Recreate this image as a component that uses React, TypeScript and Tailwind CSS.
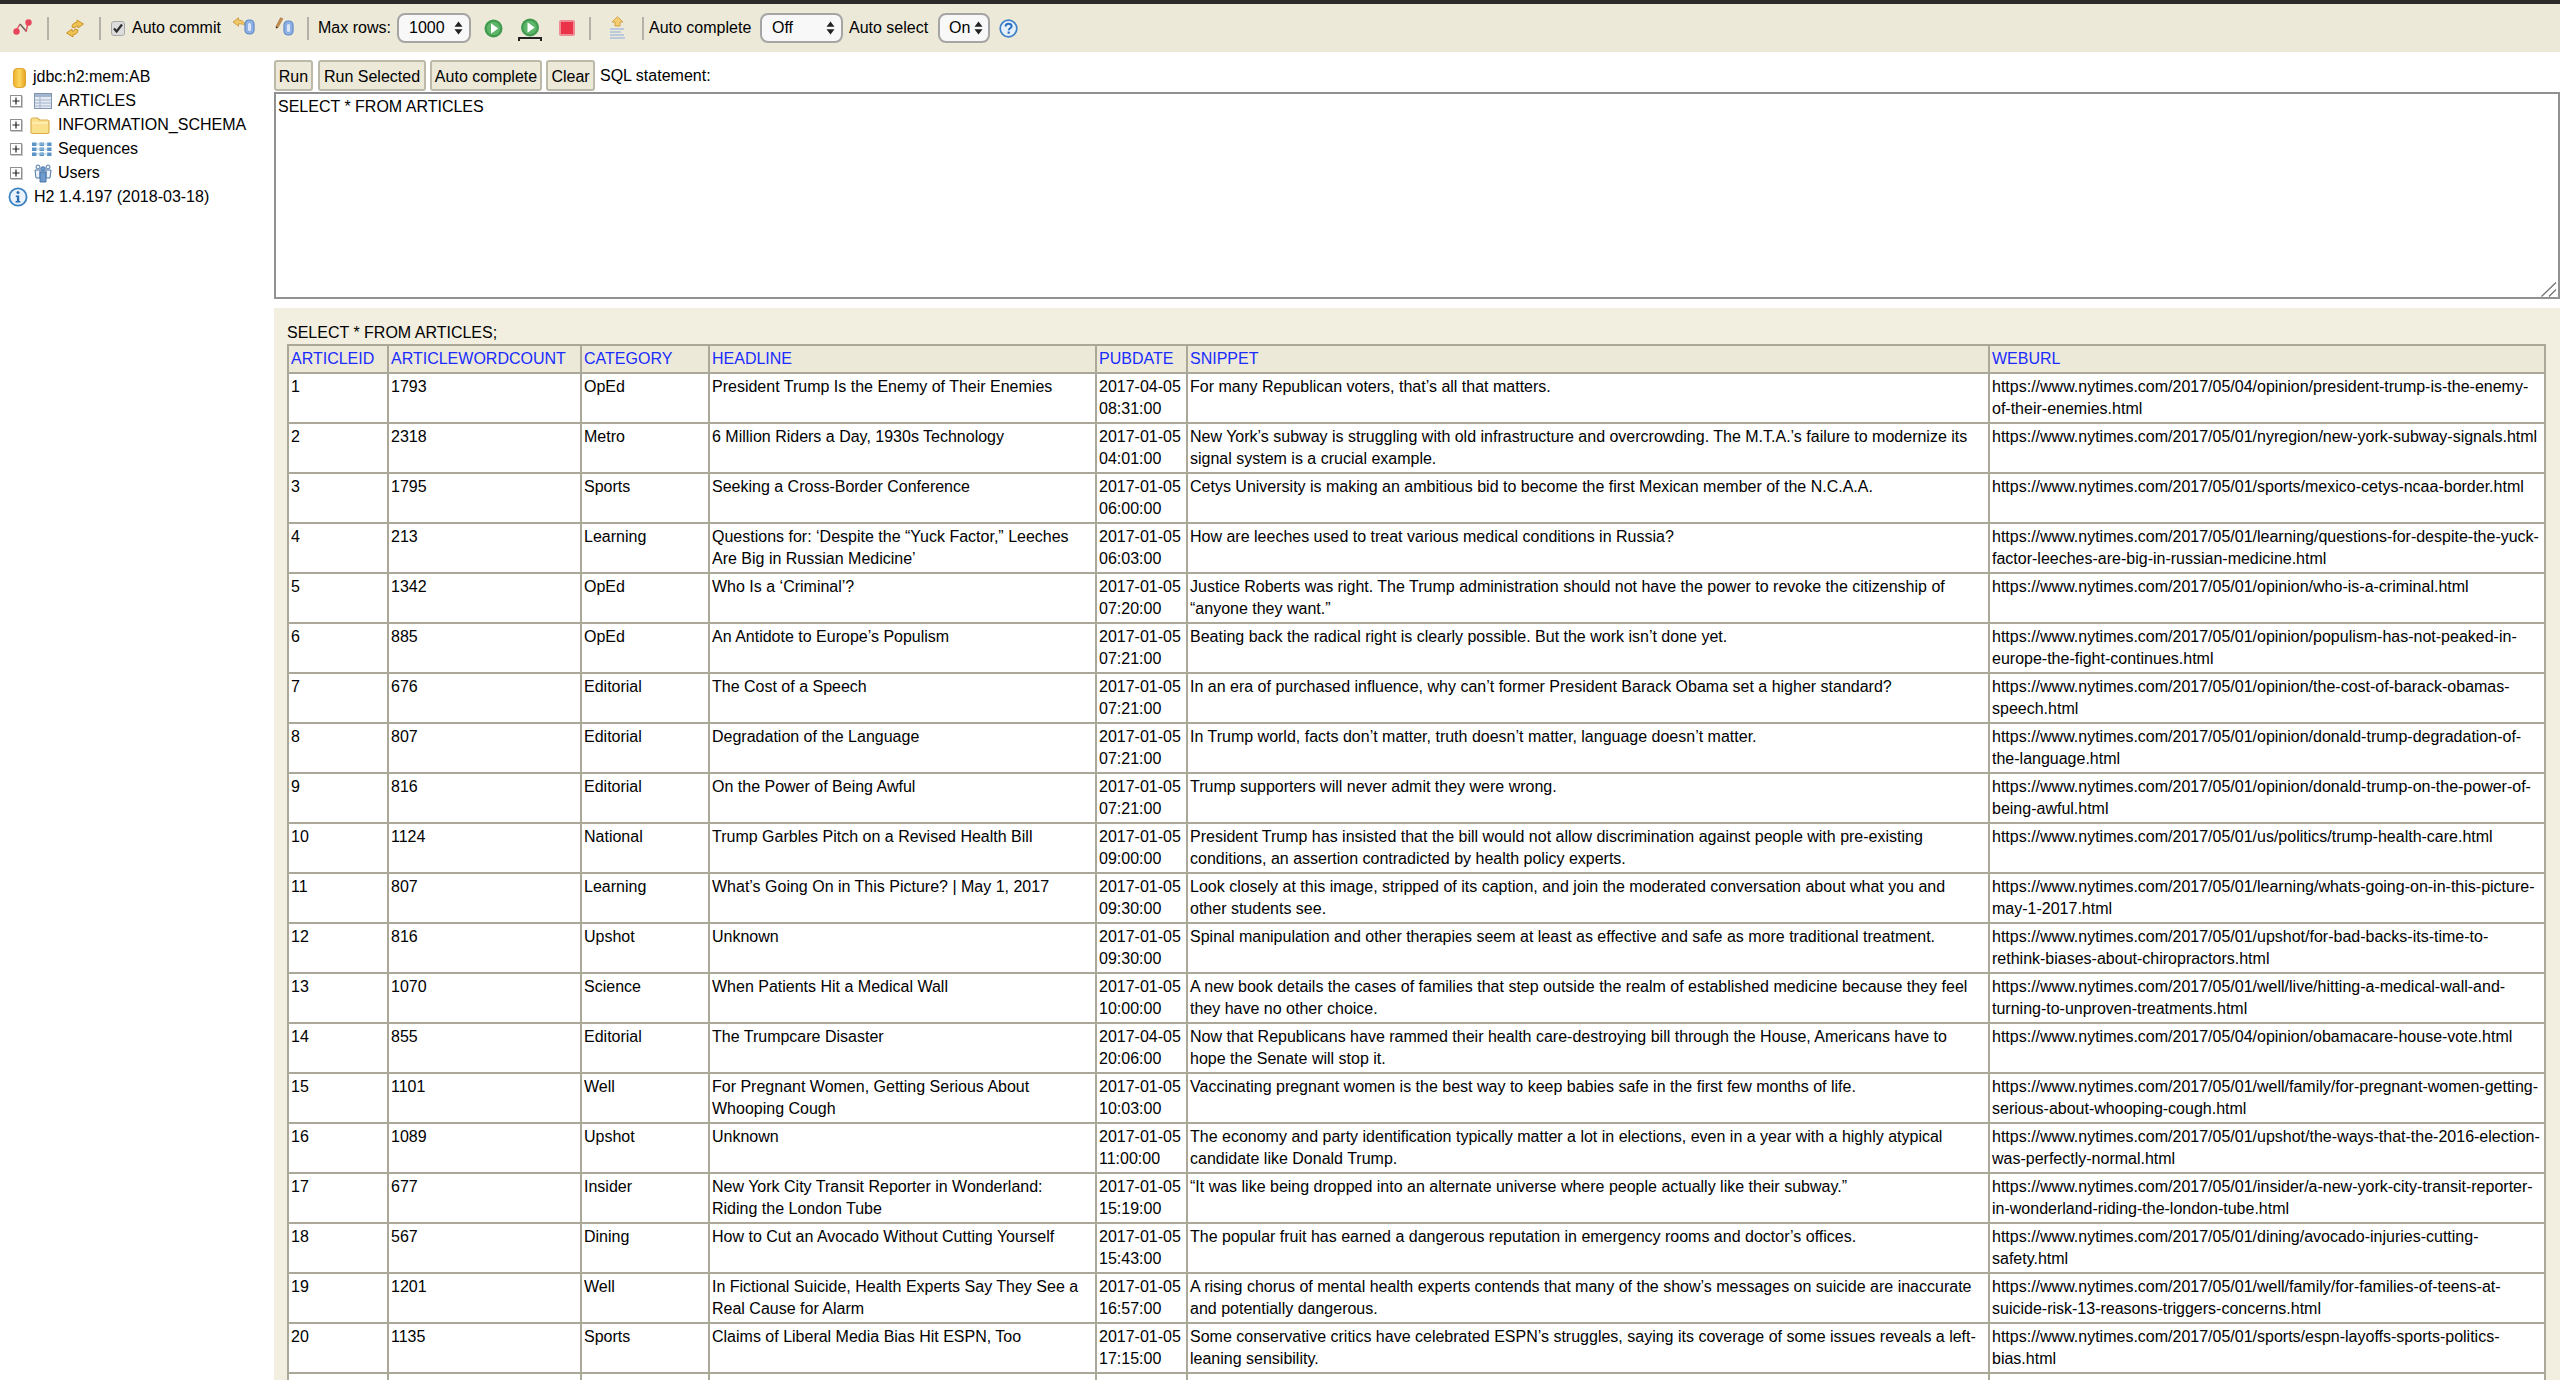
import React from "react";

const FONT = "font-['Liberation_Sans',Arial,sans-serif]";

const Sep = ({ className = "" }: { className?: string }) => (
  <div className={`w-[2px] h-[23px] bg-[#b4b2a8] shrink-0 ${className}`} />
);

const Cyl = ({ x, y }: { x: number; y: number }) => (
  <g>
    <rect x={x} y={y} width="9" height="14" rx="4" fill="#8fb0e2" stroke="#5f8ac8" strokeWidth="1.2" />
    <rect x={x + 3} y={y + 3} width="3" height="8" rx="1.5" fill="#dbe7f8" />
  </g>
);

const NodesIcon = () => (
  <svg width="19" height="17" viewBox="0 0 19 17" className="shrink-0 -mt-[2px]">
    <path d="M3 12 L7 5" stroke="#e0505f" strokeWidth="1.4" fill="none" />
    <path d="M7 5 L13 12" stroke="#6b5a58" strokeWidth="1.4" fill="none" />
    <path d="M13 13 L15 4" stroke="#e0505f" strokeWidth="1.4" fill="none" />
    <circle cx="3.5" cy="12.5" r="3.2" fill="#e8465c" />
    <circle cx="15.5" cy="3.5" r="3.2" fill="#e8465c" />
  </svg>
);

const RefreshIcon = () => (
  <svg width="20" height="19" viewBox="0 0 20 19" className="shrink-0">
    <path d="M7 8 C7 5 9 3.5 12 3.5 L12 1 L18.5 5 L13 9 L13 6.8 C11 6.8 10.5 7.5 10 9 Z" fill="#f0c452" stroke="#c9922e" strokeWidth="1" />
    <path d="M13 11 C13 14 11 15.5 8 15.5 L8 18 L1.5 14 L7 10 L7 12.2 C9 12.2 9.5 11.5 10 10 Z" fill="#f0c452" stroke="#c9922e" strokeWidth="1" />
  </svg>
);

const RollbackIcon = () => (
  <svg width="23" height="18" viewBox="0 0 23 18" className="shrink-0 -mt-[4px]">
    <path d="M1 5 L6.5 0.8 L6.5 3.2 C10 3.2 12.5 4.5 13 8.5 C11.5 7 9.5 6.8 6.5 6.8 L6.5 9.2 Z" fill="#f2c766" stroke="#c99a3e" strokeWidth="0.9" />
    <Cyl x={13} y={3} />
  </svg>
);

const CommitIcon = () => (
  <svg width="19" height="19" viewBox="0 0 19 19" className="shrink-0 -mt-[3px]">
    <path d="M1 9.5 L5.5 0.8 L7.8 1.8 L3 10.5 L1 11 Z" fill="#c98f4c" stroke="#9a6a34" strokeWidth="0.6" />
    <path d="M1 9.5 L3 10.5 L1 11.5 Z" fill="#333" />
    <Cyl x={9} y={4} />
  </svg>
);

const PlayIcon = () => (
  <svg width="19" height="19" viewBox="0 0 19 19" className="shrink-0">
    <circle cx="9.5" cy="9.5" r="9" fill="#3f9a4e" />
    <circle cx="9.5" cy="9.5" r="6.8" fill="#5cb569" />
    <path d="M7 4.3 L14.2 9.5 L7 14.7 Z" fill="#ffffff" />
  </svg>
);

const RunSelIcon = () => (
  <svg width="24" height="24" viewBox="0 0 24 24" className="shrink-0 mt-[4px]">
    <circle cx="12" cy="9.5" r="9" fill="#3f9a4e" />
    <circle cx="12" cy="9.5" r="6.8" fill="#5cb569" />
    <path d="M9.5 4.3 L16.7 9.5 L9.5 14.7 Z" fill="#ffffff" />
    <path d="M1 23 L1 20 L23 20 L23 23" stroke="#222" strokeWidth="2" fill="none" />
  </svg>
);

const StopIcon = () => (
  <div className="w-[16px] h-[16px] shrink-0 rounded-[2px] bg-[#ea3348] border-2 border-[#f08a94]" />
);

const HistoryIcon = () => (
  <svg width="17" height="25" viewBox="0 0 17 25" className="shrink-0">
    <path d="M8.5 0.8 L14 6 L11 6 L11 10 L6 10 L6 6 L3 6 Z" fill="#f4cd72" stroke="#d19d3e" strokeWidth="0.9" />
    <path d="M1 13 H15 M1 16 H12 M1 19 H15 M1 22 H16" stroke="#a9bfdc" strokeWidth="1.6" />
  </svg>
);

const HelpIcon = () => (
  <svg width="19" height="19" viewBox="0 0 19 19" className="shrink-0">
    <circle cx="9.5" cy="9.5" r="8.3" fill="#e6f0fb" stroke="#3f82c8" strokeWidth="1.7" />
    <path d="M6.6 7.4 C6.6 5.6 8 4.7 9.6 4.7 C11.3 4.7 12.6 5.7 12.6 7.2 C12.6 9.2 9.7 9.3 9.7 11.3" fill="none" stroke="#2a6fc0" strokeWidth="2" />
    <rect x="8.6" y="12.5" width="2.2" height="2.2" fill="#2a6fc0" />
  </svg>
);

const Checkbox = () => (
  <div className="w-[14px] h-[15px] shrink-0 rounded-[3px] bg-[#dcdcdc] border border-[#a8a8a8] flex items-center justify-center">
    <svg width="12" height="12" viewBox="0 0 12 12">
      <path d="M2 6.5 L4.6 9.5 L10 2.5" fill="none" stroke="#2e2e2e" strokeWidth="2.2" />
    </svg>
  </div>
);

const SelectBox = ({ label, className, pad }: { label: string; className: string; pad: string }) => (
  <div className={`h-[30px] shrink-0 rounded-[8px] border-2 border-[#a5a5a5] bg-[#f8f8f8] flex items-center justify-between ${pad} ${className}`}>
    <span>{label}</span>
    <svg width="9" height="14" viewBox="0 0 9 14" className="shrink-0">
      <path d="M4.5 0.5 L8.5 5.8 L0.5 5.8 Z M4.5 13.5 L8.5 8.2 L0.5 8.2 Z" fill="#222" />
    </svg>
  </div>
);

const Plus = () => (
  <div className="w-[12px] h-[12px] shrink-0 bg-white border border-[#8f8f8f] shadow-[1px_1px_0_#c8c8c8] flex items-center justify-center">
    <svg width="8" height="8" viewBox="0 0 8 8">
      <path d="M4 0.5 V7.5 M0.5 4 H7.5" stroke="#222" strokeWidth="1.2" />
    </svg>
  </div>
);

const DbIcon = () => (
  <svg width="13" height="20" viewBox="0 0 13 20" className="shrink-0 mt-[2px]">
    <defs>
      <linearGradient id="db" x1="0" x2="1" y1="0" y2="0">
        <stop offset="0" stopColor="#eeb02c" />
        <stop offset="0.5" stopColor="#fad65c" />
        <stop offset="1" stopColor="#e7a21e" />
      </linearGradient>
    </defs>
    <rect x="0.5" y="0.5" width="12" height="19" rx="3.5" fill="url(#db)" stroke="#e0a632" />
  </svg>
);

const TableIcon = () => (
  <svg width="18" height="16" viewBox="0 0 18 16" className="shrink-0">
    <rect x="0.5" y="0.5" width="17" height="15" fill="#e6ebf2" stroke="#8296b2" />
    <rect x="1" y="1" width="16" height="3" fill="#a3b6cf" />
    <path d="M1 7 H17 M1 10 H17 M1 13 H17 M6 4 V15" stroke="#a3b5cc" strokeWidth="1" />
  </svg>
);

const FolderIcon = () => (
  <svg width="20" height="17" viewBox="0 0 20 17" className="shrink-0">
    <path d="M1 15 V3 C1 2 2 1 3 1 H7 C8 1 9 3 10 3 H17 C18 3 19 4 19 5 V15 C19 16 18 16.5 17 16.5 H3 C2 16.5 1 16 1 15 Z" fill="#fbe08e" stroke="#dcae4c" strokeWidth="1.2" />
    <path d="M2 6 H18" stroke="#fff3c4" strokeWidth="1.2" />
  </svg>
);

const SeqIcon = () => (
  <svg width="20" height="16" viewBox="0 0 20 16" className="shrink-0">
    {[1.5, 6.5, 11.5].map((y) =>
      [0, 7.5, 15].map((x) => <rect key={`${x}-${y}`} x={x} y={y} width="4.5" height="3.5" fill="#5b94c6" />)
    )}
    <path d="M4 3 H16 M4 8 H16 M4 13 H16" stroke="#a8c6e0" strokeWidth="1" />
  </svg>
);

const UsersIcon = () => (
  <svg width="18" height="20" viewBox="0 0 18 20" className="shrink-0">
    <g fill="#eef3f9" stroke="#4f78a8" strokeWidth="1">
      <circle cx="4" cy="4" r="2" />
      <circle cx="14" cy="4" r="2" />
      <path d="M1 7 H6 L6 15 H2 Z" />
      <path d="M12 7 H17 L16 15 H12 Z" />
    </g>
    <g fill="#6f9ccb" stroke="#3f6ea8" strokeWidth="0.9">
      <circle cx="9" cy="6" r="2.3" />
      <path d="M6 9 H12 L12 19 H6 Z" />
    </g>
  </svg>
);

const InfoIcon = () => (
  <svg width="20" height="20" viewBox="0 0 20 20" className="shrink-0">
    <circle cx="10" cy="10" r="8.6" fill="#eaf2fb" stroke="#3b82c4" strokeWidth="1.8" />
    <circle cx="10" cy="5.6" r="1.5" fill="#2a6db5" />
    <path d="M7.8 8.6 H11.2 V14 H12.4 V15.4 H7.6 V14 H8.9 V10 H7.8 Z" fill="#2a6db5" />
  </svg>
);

const Btn = ({ children, className = "" }: { children: React.ReactNode; className?: string }) => (
  <div className={`h-[31px] shrink-0 flex items-center justify-center pt-[2px] bg-[#ece9d8] border-2 border-[#bdb9a8] rounded-[3px] ${className}`}>
    {children}
  </div>
);

const TreeRow = ({ plus, icon, text, iconCls }: { plus?: boolean; icon: React.ReactNode; text: string; iconCls: string }) => (
  <div className="h-[24px] flex items-center">
    <div className="w-[34px] shrink-0 pl-[10px]">{plus && <Plus />}</div>
    <div className={`flex items-center ${iconCls}`}>{icon}</div>
    <span>{text}</span>
  </div>
);

const cols = [
  ["ARTICLEID", "w-[100px]", "pr-[2px]"],
  ["ARTICLEWORDCOUNT", "w-[193px]", "pr-[2px]"],
  ["CATEGORY", "w-[128px]", "pr-[2px]"],
  ["HEADLINE", "w-[387px]", "pr-[8px]"],
  ["PUBDATE", "w-[91px]", "pr-[2px]"],
  ["SNIPPET", "w-[802px]", "pr-[2px]"],
  ["WEBURL", "w-[556px]", "pr-[4px]"],
];

const U = "https://www.nytimes.com/2017/05/";

const rows: string[][] = [
  ["1", "1793", "OpEd", "President Trump Is the Enemy of Their Enemies", "2017-04-05 08:31:00", "For many Republican voters, that’s all that matters.", U + "04/opinion/president-trump-is-the-enemy-of-their-enemies.html"],
  ["2", "2318", "Metro", "6 Million Riders a Day, 1930s Technology", "2017-01-05 04:01:00", "New York’s subway is struggling with old infrastructure and overcrowding. The M.T.A.’s failure to modernize its signal system is a crucial example.", U + "01/nyregion/new-york-subway-signals.html"],
  ["3", "1795", "Sports", "Seeking a Cross-Border Conference", "2017-01-05 06:00:00", "Cetys University is making an ambitious bid to become the first Mexican member of the N.C.A.A.", U + "01/sports/mexico-cetys-ncaa-border.html"],
  ["4", "213", "Learning", "Questions for: ‘Despite the “Yuck Factor,” Leeches Are Big in Russian Medicine’", "2017-01-05 06:03:00", "How are leeches used to treat various medical conditions in Russia?", U + "01/learning/questions-for-despite-the-yuck-factor-leeches-are-big-in-russian-medicine.html"],
  ["5", "1342", "OpEd", "Who Is a ‘Criminal’?", "2017-01-05 07:20:00", "Justice Roberts was right. The Trump administration should not have the power to revoke the citizenship of “anyone they want.”", U + "01/opinion/who-is-a-criminal.html"],
  ["6", "885", "OpEd", "An Antidote to Europe’s Populism", "2017-01-05 07:21:00", "Beating back the radical right is clearly possible. But the work isn’t done yet.", U + "01/opinion/populism-has-not-peaked-in-europe-the-fight-continues.html"],
  ["7", "676", "Editorial", "The Cost of a Speech", "2017-01-05 07:21:00", "In an era of purchased influence, why can’t former President Barack Obama set a higher standard?", U + "01/opinion/the-cost-of-barack-obamas-speech.html"],
  ["8", "807", "Editorial", "Degradation of the Language", "2017-01-05 07:21:00", "In Trump world, facts don’t matter, truth doesn’t matter, language doesn’t matter.", U + "01/opinion/donald-trump-degradation-of-the-language.html"],
  ["9", "816", "Editorial", "On the Power of Being Awful", "2017-01-05 07:21:00", "Trump supporters will never admit they were wrong.", U + "01/opinion/donald-trump-on-the-power-of-being-awful.html"],
  ["10", "1124", "National", "Trump Garbles Pitch on a Revised Health Bill", "2017-01-05 09:00:00", "President Trump has insisted that the bill would not allow discrimination against people with pre-existing conditions, an assertion contradicted by health policy experts.", U + "01/us/politics/trump-health-care.html"],
  ["11", "807", "Learning", "What’s Going On in This Picture? | May 1, 2017", "2017-01-05 09:30:00", "Look closely at this image, stripped of its caption, and join the moderated conversation about what you and other students see.", U + "01/learning/whats-going-on-in-this-picture-may-1-2017.html"],
  ["12", "816", "Upshot", "Unknown", "2017-01-05 09:30:00", "Spinal manipulation and other therapies seem at least as effective and safe as more traditional treatment.", U + "01/upshot/for-bad-backs-its-time-to-rethink-biases-about-chiropractors.html"],
  ["13", "1070", "Science", "When Patients Hit a Medical Wall", "2017-01-05 10:00:00", "A new book details the cases of families that step outside the realm of established medicine because they feel they have no other choice.", U + "01/well/live/hitting-a-medical-wall-and-turning-to-unproven-treatments.html"],
  ["14", "855", "Editorial", "The Trumpcare Disaster", "2017-04-05 20:06:00", "Now that Republicans have rammed their health care-destroying bill through the House, Americans have to hope the Senate will stop it.", U + "04/opinion/obamacare-house-vote.html"],
  ["15", "1101", "Well", "For Pregnant Women, Getting Serious About Whooping Cough", "2017-01-05 10:03:00", "Vaccinating pregnant women is the best way to keep babies safe in the first few months of life.", U + "01/well/family/for-pregnant-women-getting-serious-about-whooping-cough.html"],
  ["16", "1089", "Upshot", "Unknown", "2017-01-05 11:00:00", "The economy and party identification typically matter a lot in elections, even in a year with a highly atypical candidate like Donald Trump.", U + "01/upshot/the-ways-that-the-2016-election-was-perfectly-normal.html"],
  ["17", "677", "Insider", "New York City Transit Reporter in Wonderland: Riding the London Tube", "2017-01-05 15:19:00", "“It was like being dropped into an alternate universe where people actually like their subway.”", U + "01/insider/a-new-york-city-transit-reporter-in-wonderland-riding-the-london-tube.html"],
  ["18", "567", "Dining", "How to Cut an Avocado Without Cutting Yourself", "2017-01-05 15:43:00", "The popular fruit has earned a dangerous reputation in emergency rooms and doctor’s offices.", U + "01/dining/avocado-injuries-cutting-safety.html"],
  ["19", "1201", "Well", "In Fictional Suicide, Health Experts Say They See a Real Cause for Alarm", "2017-01-05 16:57:00", "A rising chorus of mental health experts contends that many of the show’s messages on suicide are inaccurate and potentially dangerous.", U + "01/well/family/for-families-of-teens-at-suicide-risk-13-reasons-triggers-concerns.html"],
  ["20", "1135", "Sports", "Claims of Liberal Media Bias Hit ESPN, Too", "2017-01-05 17:15:00", "Some conservative critics have celebrated ESPN’s struggles, saying its coverage of some issues reveals a left-leaning sensibility.", U + "01/sports/espn-layoffs-sports-politics-bias.html"],
  ["21", "1024", "Sports", "", "2017-01-05 17:30:00", "", ""],
];

export default function App() {
  return (
    <div className={`${FONT} h-[1380px] overflow-hidden bg-white text-[16px] leading-[22px] text-black flex flex-col`}>
      <div className="h-[4px] bg-[#2b2b2b] shrink-0" />
      <div className="h-[48px] shrink-0 bg-[#ece9d8] flex items-center whitespace-nowrap">
        <div className="ml-[13px] flex items-center"><NodesIcon /></div>
        <Sep className="ml-[15px]" />
        <div className="ml-[16px] flex items-center"><RefreshIcon /></div>
        <Sep className="ml-[14px]" />
        <div className="ml-[10px]"><Checkbox /></div>
        <span className="ml-[7px] w-[89px]">Auto commit</span>
        <div className="ml-[11px] flex items-center"><RollbackIcon /></div>
        <div className="ml-[20px] flex items-center"><CommitIcon /></div>
        <Sep className="ml-[13px]" />
        <span className="ml-[9px] w-[72px]">Max rows:</span>
        <SelectBox label="1000" className="ml-[7px] w-[74px]" pad="pl-[10px] pr-[6px]" />
        <div className="ml-[13px] flex items-center"><PlayIcon /></div>
        <div className="ml-[15px] flex items-center"><RunSelIcon /></div>
        <div className="ml-[17px] flex items-center"><StopIcon /></div>
        <Sep className="ml-[14px]" />
        <div className="ml-[18px] flex items-center"><HistoryIcon /></div>
        <Sep className="ml-[16px]" />
        <span className="ml-[5px] w-[102px]">Auto complete</span>
        <SelectBox label="Off" className="ml-[9px] w-[83px]" pad="pl-[10px] pr-[6px]" />
        <span className="ml-[6px] w-[79px]">Auto select</span>
        <SelectBox label="On" className="ml-[10px] w-[52px]" pad="pl-[9px] pr-[5px]" />
        <div className="ml-[9px] flex items-center"><HelpIcon /></div>
      </div>

      <div className="flex-1 min-h-0 flex">
        <div className="w-[274px] shrink-0 pt-[13px] whitespace-nowrap">
          <TreeRow icon={<DbIcon />} text="jdbc:h2:mem:AB" iconCls="-ml-[21px] w-[20px]" />
          <TreeRow plus icon={<TableIcon />} text="ARTICLES" iconCls="w-[24px]" />
          <TreeRow plus icon={<FolderIcon />} text="INFORMATION_SCHEMA" iconCls="-ml-[4px] w-[28px]" />
          <TreeRow plus icon={<SeqIcon />} text="Sequences" iconCls="-ml-[2px] w-[26px]" />
          <TreeRow plus icon={<UsersIcon />} text="Users" iconCls="w-[24px]" />
          <div className="h-[24px] flex items-center">
            <div className="ml-[8px] w-[26px]"><InfoIcon /></div>
            <span>H2 1.4.197 (2018-03-18)</span>
          </div>
        </div>

        <div className="flex-1 min-w-0 flex flex-col pt-[8px]">
          <div className="h-[32px] shrink-0 flex items-start whitespace-nowrap">
            <Btn className="w-[39px]">Run</Btn>
            <Btn className="ml-[5px] w-[108px]">Run Selected</Btn>
            <Btn className="ml-[4px] w-[112px]">Auto complete</Btn>
            <Btn className="ml-[4px] w-[49px]">Clear</Btn>
            <span className="ml-[5px] mt-[5px]">SQL statement:</span>
          </div>
          <div className="relative h-[207px] shrink-0">
            <textarea
              readOnly
              defaultValue="SELECT * FROM ARTICLES"
              className="block w-full h-full border-2 border-[#919191] px-[2px] py-[2px] text-[16px] leading-[22px] outline-none resize-none"
            />
            <svg width="16" height="15" viewBox="0 0 16 15" className="absolute right-[3px] bottom-[2px] pointer-events-none">
              <path d="M0.5 14.5 L15 0.5 M8 14.5 L15 7.5" stroke="#6f6f6f" strokeWidth="1.2" fill="none" />
            </svg>
          </div>
          <div className="flex-1 min-h-0 mt-[9px] bg-[#f2efe1] pt-[14px] pl-[13px] overflow-hidden">
            <div className="h-[22px]">SELECT * FROM ARTICLES;</div>
            <table className="table-fixed border-collapse w-[2257px] bg-white">
              <colgroup>
                {cols.map(([n, w]) => (
                  <col key={n} className={w} />
                ))}
              </colgroup>
              <thead>
                <tr>
                  {cols.map(([n]) => (
                    <th key={n} className="border-2 border-[#aca899] bg-[#ece9d8] px-[2px] py-[2px] text-left align-top font-normal text-[#1a2cff]">
                      {n}
                    </th>
                  ))}
                </tr>
              </thead>
              <tbody>
                {rows.map((r) => (
                  <tr key={r[0]}>
                    {r.map((c, i) => (
                      <td key={i} className={`border-2 border-[#aca899] pl-[2px] py-[2px] align-top h-[50px] ${cols[i][2]}`}>
                        {c}
                      </td>
                    ))}
                  </tr>
                ))}
              </tbody>
            </table>
          </div>
        </div>
      </div>
    </div>
  );
}
